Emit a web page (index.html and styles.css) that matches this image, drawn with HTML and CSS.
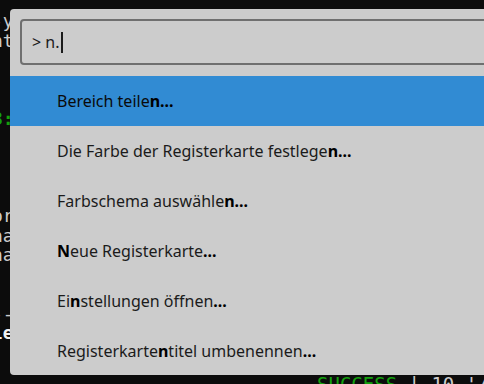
FILE: index.html
```html
<!DOCTYPE html>
<html lang="de">
<head>
    <meta charset="UTF-8">
    <title>Befehlspalette</title>
    <link rel="stylesheet" href="styles.css">
</head>
<body>
    <pre class="terminal"><span class="line">-y</span>
<span class="line">nt</span>



<span class="line green">3:</span>




<span class="line">or</span>
<span class="line">na</span>
<span class="line">na</span>


<span class="line">--</span>
<span class="line bold">le</span>

</pre>
    <div class="status"><span class="green">SUCCESS</span> | 10 '/</div>

    <div class="palette">
        <div class="search">
            <span class="prompt">&gt; n.</span><span class="caret"></span>
        </div>
        <ul class="commands">
            <li class="selected">Bereich teile<b>n...</b></li>
            <li>Die Farbe der Registerkarte festlege<b>n...</b></li>
            <li>Farbschema auswähle<b>n...</b></li>
            <li><b>N</b>eue Registerkarte<b>...</b></li>
            <li>Ei<b>n</b>stellungen öffnen<b>...</b></li>
            <li>Registerkarte<b>n</b>titel umbenennen<b>...</b></li>
        </ul>
    </div>
</body>
</html>
```

FILE: styles.css
```css
* {
    box-sizing: border-box;
    margin: 0;
    padding: 0;
}

html, body {
    width: 484px;
    height: 384px;
    overflow: hidden;
    background-color: #0c0c0c;
}

body {
    position: relative;
}

.terminal {
    font-family: 'DejaVu Sans Mono', monospace;
    font-size: 18px;
    line-height: 19.5px;
    color: #cccccc;
    padding-top: 11px;
    margin-left: -8px;
}

.green {
    color: #13a10e;
    font-weight: bold;
}

.bold {
    font-weight: bold;
    color: #f2f2f2;
}

.status {
    position: absolute;
    left: 317px;
    top: 373px;
    font-family: 'DejaVu Sans Mono', monospace;
    font-size: 19px;
    color: #cccccc;
    white-space: pre;
}

.status .green {
    font-weight: normal;
}

/* command palette overlay */
.palette {
    position: absolute;
    left: 10px;
    top: 9px;
    right: -20px;
    bottom: 9px;
    background-color: #cccccc;
    border-radius: 4px;
    padding-top: 10px;
    font-family: 'Noto Sans', 'Open Sans', sans-serif;
    color: #1b1b1b;
}

.search {
    margin-left: 10px;
    height: 46px;
    border: 2px solid #6f6f6f;
    border-radius: 4px;
    display: flex;
    align-items: center;
    padding-left: 10px;
    font-size: 16px;
}

.caret {
    width: 2px;
    height: 21px;
    background-color: #1b1b1b;
    margin-left: 1px;
}

.commands {
    list-style: none;
    margin-top: 11px;
}

.commands li {
    height: 50px;
    display: flex;
    align-items: center;
    padding-left: 47px;
    font-size: 16px;
}

.commands li.selected {
    background-color: #318bd3;
    color: #0a0a0a;
}

.commands b {
    font-weight: bold;
    color: #000;
}
```
